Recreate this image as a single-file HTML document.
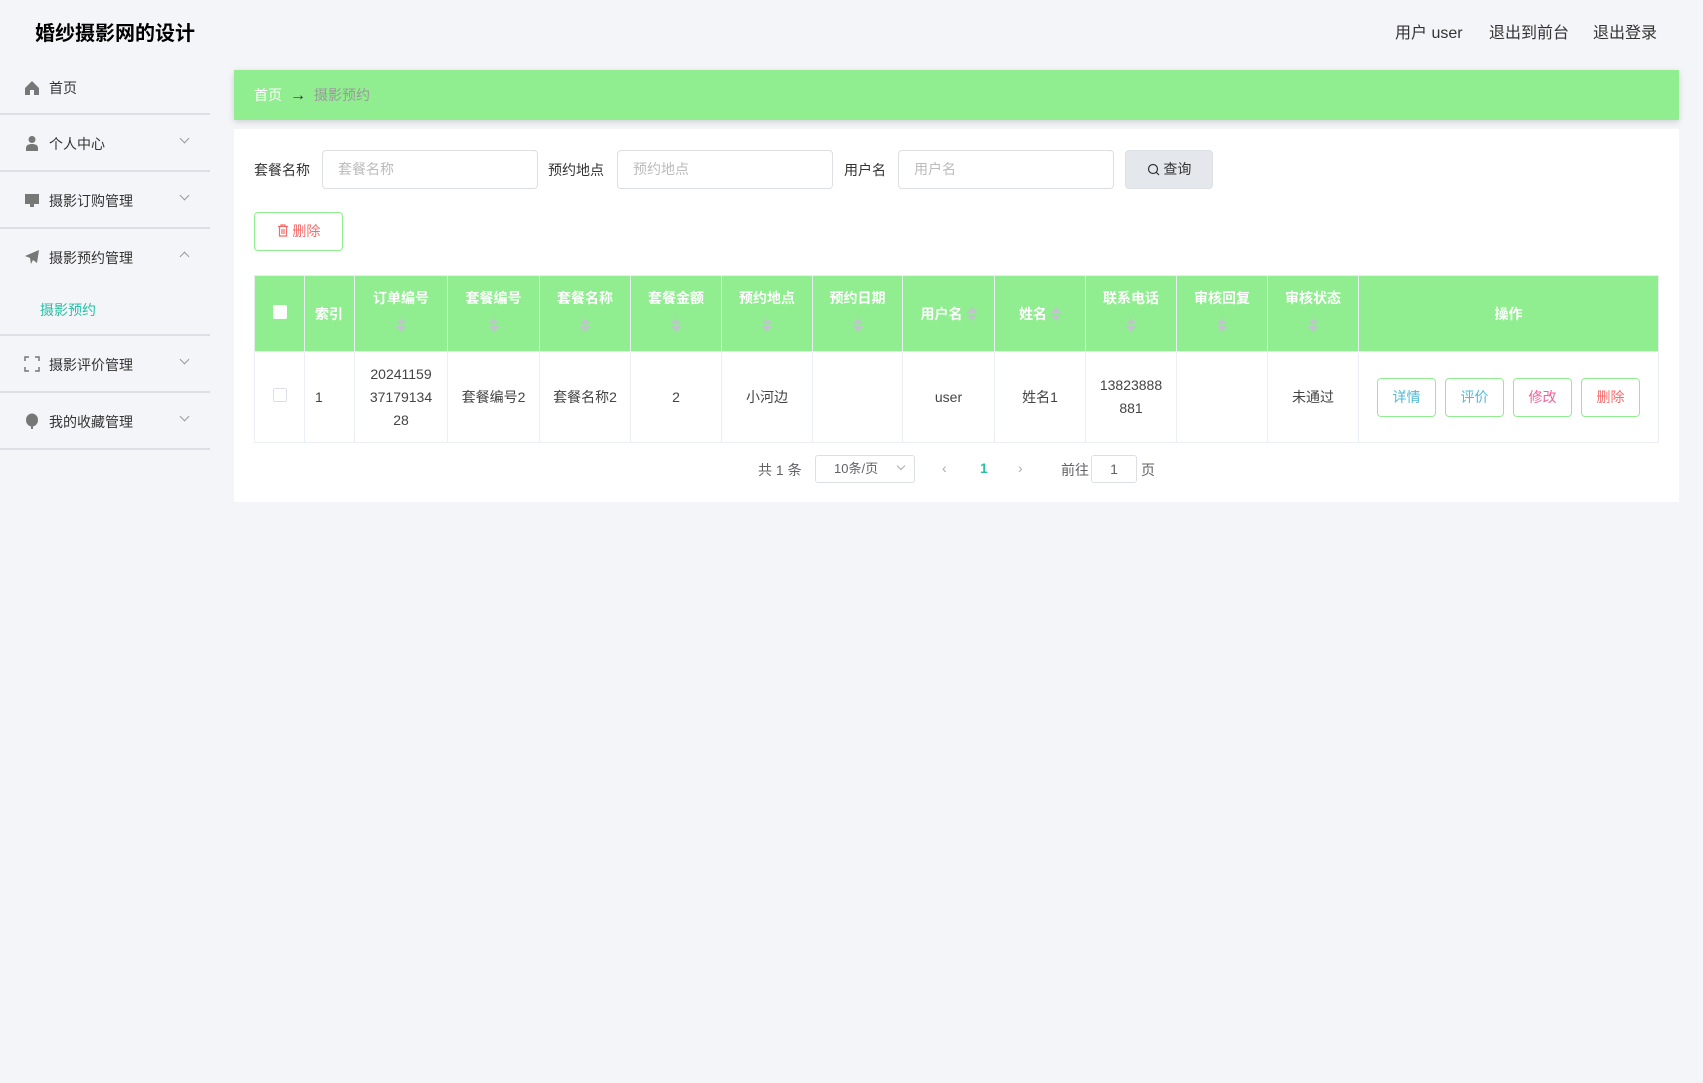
<!DOCTYPE html>
<html><head><meta charset="utf-8"><style>
*{box-sizing:border-box;margin:0;padding:0}
body{width:1703px;height:1083px;background:#f4f5f8;font-family:"Liberation Sans","Noto Sans CJK SC",sans-serif;font-size:14px;color:#333;position:relative;overflow:hidden}
.abs{position:absolute}
.title{left:35px;top:17px;font-size:20px;font-weight:bold;color:#000}
.top{top:19px;font-size:16px;color:#333}
.side{left:0;top:61px;width:210px;height:1022px;background:#f4f5f8}
.mi{position:absolute;left:0;width:210px;border-bottom:2px solid #dcdfe6;font-size:14px;color:#333}
.mi .ic{position:absolute;left:24px;width:16px;height:16px}
.mi .tx{position:absolute;left:49px}
.mi .ar{position:absolute;left:181px;width:7px;height:7px;border-right:1px solid #999;border-bottom:1px solid #999;transform:rotate(45deg)}
.crumb{left:234px;top:70px;width:1445px;height:50px;background:#90ee90;box-shadow:0 2px 6px rgba(0,0,0,.15);font-size:14px;line-height:50px;padding-left:20px}
.card{left:234px;top:129px;width:1445px;height:373px;background:#fff}
.lbl{font-size:14px;color:#333;top:160px}
.inp{top:150px;height:39px;border:1px solid #dcdfe6;border-radius:4px;color:#bbb;font-size:14px;line-height:37px;padding-left:15px;background:#fff}
table{position:absolute;left:254px;top:275px;width:1404px;border-collapse:collapse;table-layout:fixed}
th{background:#90ee90;color:#fff;font-weight:bold;height:76px;border:1px solid #e6eef0;font-size:14px;vertical-align:middle;text-align:center}
th.t{vertical-align:top;padding-top:12px}
td{height:91px;border:1px solid #ebeef5;text-align:center;font-size:14px;color:#444;line-height:23px}
.so{display:block;margin:10px auto 0;width:10px;height:16px;position:relative}
.so:before{content:"";position:absolute;left:0;top:0;border:5px solid transparent;border-bottom:6px solid #c0c4cc;border-top:0}
.so:after{content:"";position:absolute;left:0;top:8px;border:5px solid transparent;border-top:6px solid #c0c4cc;border-bottom:0}
.si{display:inline-block;width:10px;height:16px;position:relative;vertical-align:middle;margin-left:4px}
.si:before{content:"";position:absolute;left:0;top:0;border:5px solid transparent;border-bottom:6px solid #c0c4cc;border-top:0}
.si:after{content:"";position:absolute;left:0;top:8px;border:5px solid transparent;border-top:6px solid #c0c4cc;border-bottom:0}
.ob{position:absolute;top:378px;width:59px;height:39px;border:1px solid #90ee90;border-radius:4px;background:#fff;text-align:center;line-height:37px;font-size:14px}
</style></head><body>
<div class="abs title">婚纱摄影网的设计</div>
<div class="abs top" style="left:1395px">用户 user</div>
<div class="abs top" style="left:1489px">退出到前台</div>
<div class="abs top" style="left:1593px">退出登录</div>

<div class="abs side">
 <div class="mi" style="top:0;height:54px"><svg class="ic" style="top:19px" viewBox="0 0 16 16"><path d="M1 8L8 1l7 7v7h-5v-5H6v5H1z" fill="#777"/></svg><span class="tx" style="top:17px">首页</span></div>
 <div class="mi" style="top:54px;height:57px"><svg class="ic" style="top:20px" viewBox="0 0 16 16"><circle cx="8" cy="4.5" r="3.5" fill="#777"/><path d="M2 16v-3c0-3 3-4 6-4s6 1 6 4v3z" fill="#777"/></svg><span class="tx" style="top:19px">个人中心</span><span class="ar" style="top:20px"></span></div>
 <div class="mi" style="top:111px;height:57px"><svg class="ic" style="top:20px" viewBox="0 0 16 16"><rect x="1" y="2" width="14" height="10" fill="#777"/><rect x="6" y="12" width="4" height="3" fill="#777"/></svg><span class="tx" style="top:19px">摄影订购管理</span><span class="ar" style="top:20px"></span></div>
 <div class="mi" style="top:168px;height:107px"><svg class="ic" style="top:20px" viewBox="0 0 16 16"><path d="M15 1L1 7l5 2 1 6 2-4 4 3z" fill="#777"/></svg><span class="tx" style="top:19px">摄影预约管理</span><span class="ar" style="top:24px;transform:rotate(225deg)"></span><span style="position:absolute;left:40px;top:71px;color:#26c0a6">摄影预约</span></div>
 <div class="mi" style="top:275px;height:57px"><svg class="ic" style="top:20px" viewBox="0 0 16 16" fill="none" stroke="#777" stroke-width="1.5"><path d="M1 5V1h4M11 1h4v4M15 11v4h-4M5 15H1v-4"/></svg><span class="tx" style="top:19px">摄影评价管理</span><span class="ar" style="top:20px"></span></div>
 <div class="mi" style="top:332px;height:57px"><svg class="ic" style="top:20px" viewBox="0 0 16 16"><ellipse cx="8" cy="7" rx="6" ry="6.5" fill="#777"/><rect x="7" y="13" width="2" height="3" fill="#777"/></svg><span class="tx" style="top:19px">我的收藏管理</span><span class="ar" style="top:20px"></span></div>
</div>

<div class="abs crumb"><span style="color:#fff">首页</span><span style="color:#333;margin:0 8px;font-size:16px">→</span><span style="color:#999">摄影预约</span></div>
<div class="abs card"></div>

<div class="abs lbl" style="left:254px">套餐名称</div>
<div class="abs inp" style="left:322px;width:216px">套餐名称</div>
<div class="abs lbl" style="left:548px">预约地点</div>
<div class="abs inp" style="left:617px;width:216px">预约地点</div>
<div class="abs lbl" style="left:844px">用户名</div>
<div class="abs inp" style="left:898px;width:216px">用户名</div>
<div class="abs" style="left:1125px;top:150px;width:88px;height:39px;background:#e4e7ec;border:1px solid #dcdfe6;border-radius:4px;text-align:center;line-height:37px;color:#333"><svg width="13" height="13" viewBox="0 0 13 13" style="vertical-align:-2px" fill="none" stroke="#333" stroke-width="1.2"><circle cx="6" cy="6" r="4.5"/><path d="M9.3 9.3L12 12"/></svg> 查询</div>
<div class="abs" style="left:254px;top:212px;width:89px;height:39px;border:1px solid #90ee90;border-radius:4px;text-align:center;line-height:37px;color:#f56c6c;background:#fff"><svg width="12" height="13" viewBox="0 0 12 13" style="vertical-align:-1px" fill="none" stroke="#f56c6c" stroke-width="1.2"><path d="M1 2.5h10M4 2.5V1h4v1.5M2.5 2.5v9.5h7V2.5M5 5v5M7 5v5"/></svg> 删除</div>

<table>
<colgroup><col style="width:50px"><col style="width:50px"><col style="width:93px"><col style="width:92px"><col style="width:91px"><col style="width:91px"><col style="width:91px"><col style="width:90px"><col style="width:92px"><col style="width:91px"><col style="width:91px"><col style="width:91px"><col style="width:91px"><col style="width:300px"></colgroup>
<tr><th><span style="display:inline-block;width:14px;height:14px;background:#fff;border-radius:2px"></span></th><th style="text-align:left;padding-left:10px">索引</th><th class="t">订单编号<span class="so"></span></th><th class="t">套餐编号<span class="so"></span></th><th class="t">套餐名称<span class="so"></span></th><th class="t">套餐金额<span class="so"></span></th><th class="t">预约地点<span class="so"></span></th><th class="t">预约日期<span class="so"></span></th><th>用户名<span class="si"></span></th><th>姓名<span class="si"></span></th><th class="t">联系电话<span class="so"></span></th><th class="t">审核回复<span class="so"></span></th><th class="t">审核状态<span class="so"></span></th><th>操作</th></tr>
<tr><td><span style="display:inline-block;width:14px;height:14px;border:1px solid #dcdfe6;border-radius:2px"></span></td><td style="text-align:left;padding-left:10px">1</td><td>20241159<br>37179134<br>28</td><td>套餐编号2</td><td>套餐名称2</td><td>2</td><td>小河边</td><td></td><td>user</td><td>姓名1</td><td>13823888<br>881</td><td></td><td>未通过</td><td></td></tr>
</table>
<div class="ob" style="left:1377px;color:#4fb9d6">详情</div>
<div class="ob" style="left:1445px;color:#4fb9d6">评价</div>
<div class="ob" style="left:1513px;color:#f0609a">修改</div>
<div class="ob" style="left:1581px;color:#f56c6c">删除</div>

<div class="abs" style="left:758px;top:460px;color:#606266">共 1 条</div>
<div class="abs" style="left:815px;top:455px;width:100px;height:28px;border:1px solid #dcdfe6;border-radius:3px;line-height:26px;padding-left:18px;color:#606266;font-size:13px">10条/页<span style="position:absolute;right:10px;top:7px;width:6px;height:6px;border-right:1px solid #aaa;border-bottom:1px solid #aaa;transform:rotate(45deg)"></span></div>
<div class="abs" style="left:942px;top:460px;color:#aaa">‹</div>
<div class="abs" style="left:980px;top:460px;color:#26c0a6;font-weight:bold">1</div>
<div class="abs" style="left:1018px;top:460px;color:#aaa">›</div>
<div class="abs" style="left:1061px;top:460px;color:#606266">前往</div>
<div class="abs" style="left:1091px;top:455px;width:46px;height:28px;border:1px solid #dcdfe6;border-radius:3px;text-align:center;line-height:26px;color:#606266">1</div>
<div class="abs" style="left:1141px;top:460px;color:#606266">页</div>
</body></html>
